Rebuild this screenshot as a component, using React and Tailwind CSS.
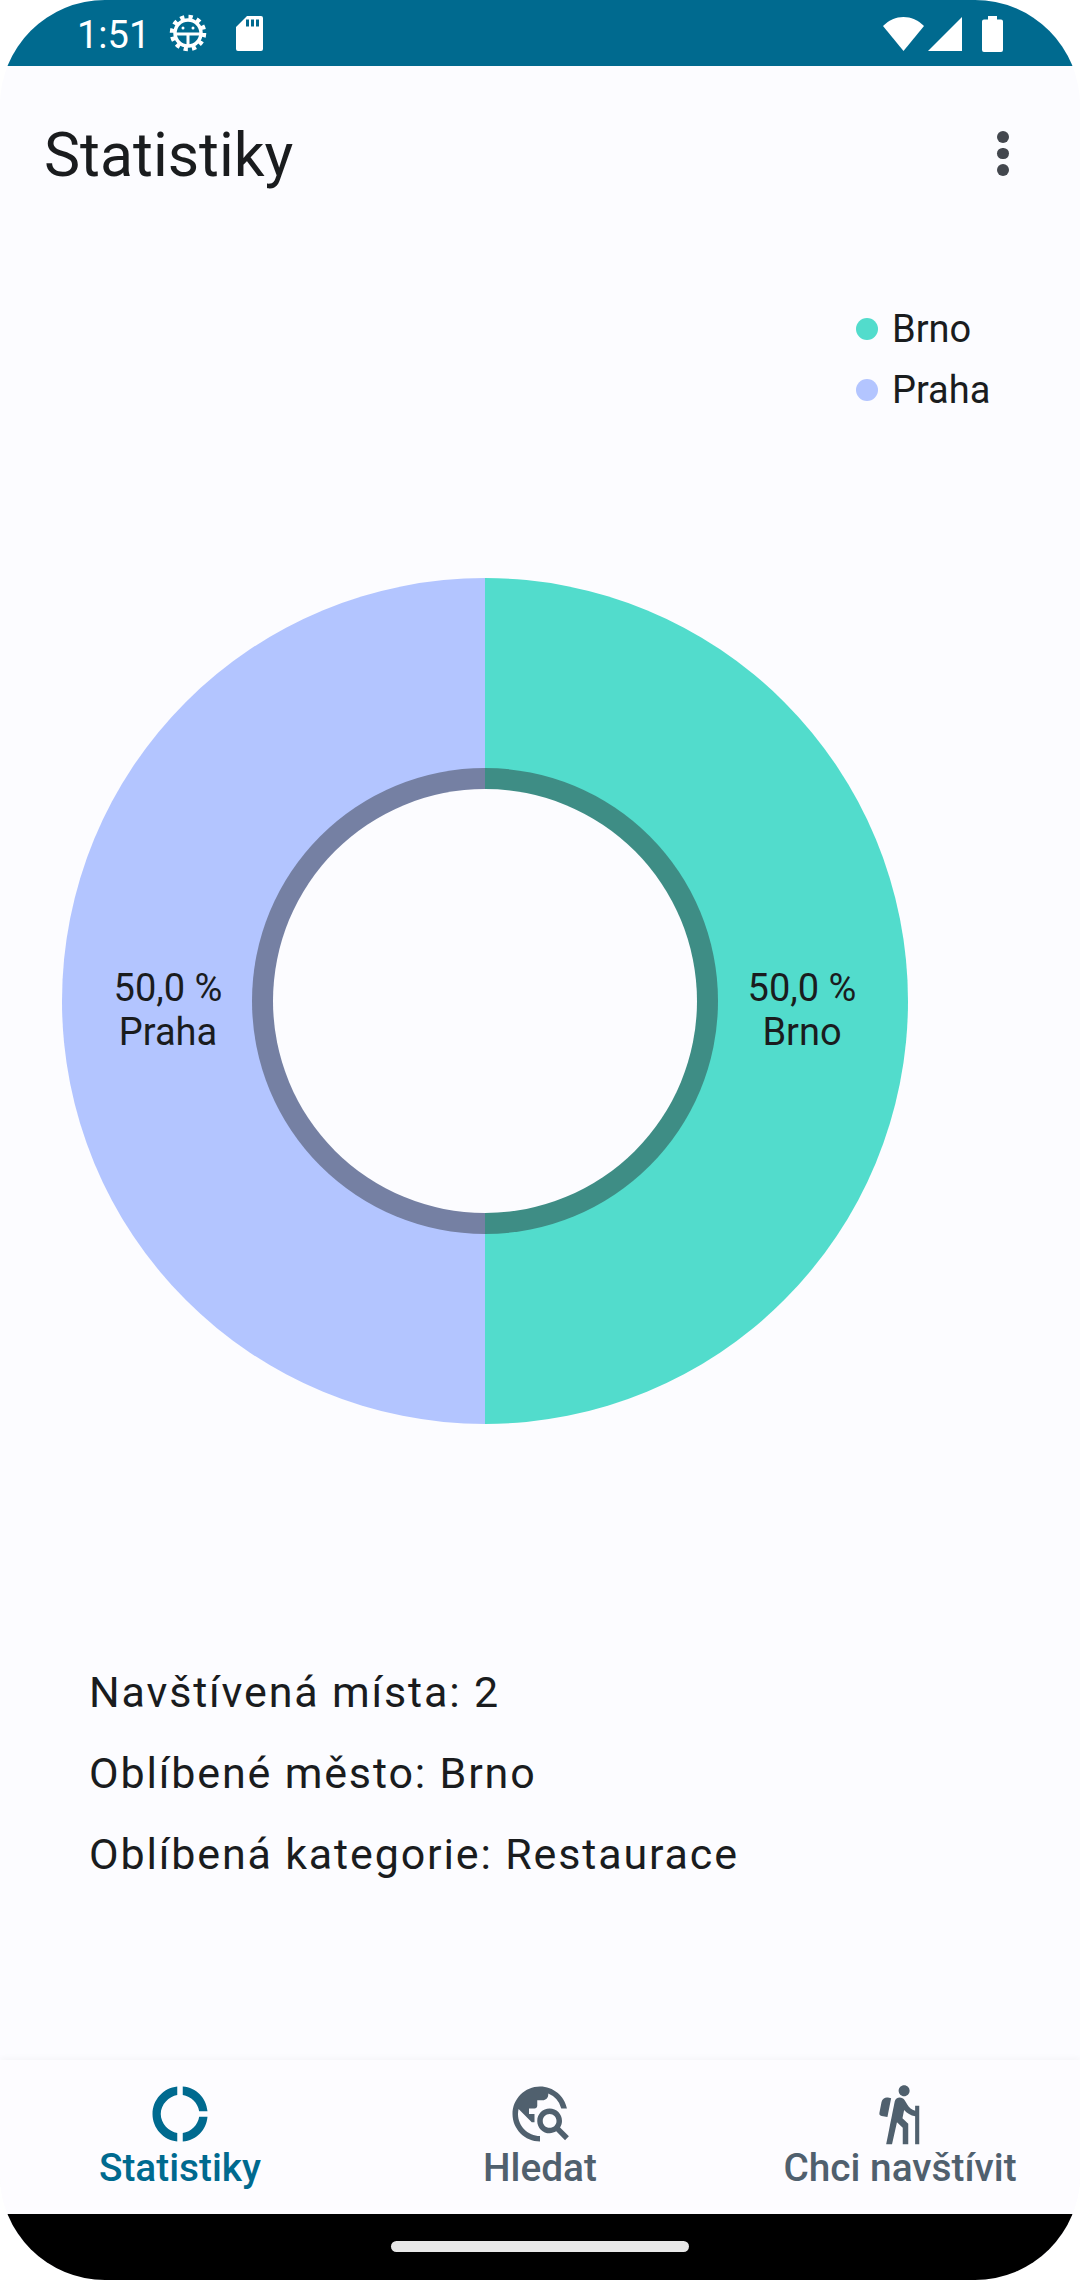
import { MdDonutLarge, MdTravelExplore, MdHiking } from 'react-icons/md';

const font = { fontFamily: 'Roboto, sans-serif' };

// Debug notification gear with the little android face inside
const GearIcon = () => (
  <svg width="38" height="38" viewBox="0 0 38 38" fill="none" stroke="white">
    <circle cx="19" cy="19" r="16" strokeWidth="4.5" strokeDasharray="4.2 4.18" />
    <circle cx="19" cy="19" r="13" strokeWidth="3.5" />
    <path d="M6 20h26M19 20v13" strokeWidth="3" />
    <circle cx="14" cy="14" r="1.5" fill="white" stroke="none" />
    <circle cx="24" cy="14" r="1.5" fill="white" stroke="none" />
  </svg>
);

const SdIcon = () => (
  <svg className="ml-[29px]" width="27" height="35" viewBox="0 0 27 35" fill="white">
    <path d="M11 0h14a2 2 0 0 1 2 2v31a2 2 0 0 1-2 2H2a2 2 0 0 1-2-2V11zM10 3.500v7h3v-7zM15 3.500v7h3v-7zM20 3.500v7h3v-7z" fillRule="evenodd" />
  </svg>
);

const StatusBar = () => (
  <div className="h-[66px] shrink-0 bg-[#006a8f] flex items-center pl-[77px] pr-[77px] text-white">
    <span className="text-[38px] leading-none pt-[3px] w-[92px]">1:51</span>
    <GearIcon />
    <SdIcon />
    <div className="ml-auto flex items-center pt-[2px]">
      <svg width="41" height="34" viewBox="0 0 41 34" fill="white">
        <path d="M0 9C6 3 13 0 20.500 0S35 3 41 9L20.500 34z" />
      </svg>
      <svg className="ml-[4px]" width="34" height="34" viewBox="0 0 34 34" fill="white">
        <path d="M34 0v34H0z" />
      </svg>
      <svg className="ml-[20px]" width="21" height="36" viewBox="0 0 21 36" fill="white">
        <path d="M6 0h9v3.500h4a2 2 0 0 1 2 2V34a2 2 0 0 1-2 2H2a2 2 0 0 1-2-2V5.500a2 2 0 0 1 2-2h4z" />
      </svg>
    </div>
  </div>
);

const AppBar = () => (
  <div className="h-[176px] shrink-0 flex items-center pl-[44px] pt-[5px] relative">
    <h1 className="text-[60.800px] leading-none text-[#1a1c1e] whitespace-nowrap">Statistiky</h1>
    <div className="absolute left-[997px] top-[65px] flex flex-col gap-[5px]">
      <span className="w-[11.500px] h-[11.500px] rounded-full bg-[#43474e]" />
      <span className="w-[11.500px] h-[11.500px] rounded-full bg-[#43474e]" />
      <span className="w-[11.500px] h-[11.500px] rounded-full bg-[#43474e]" />
    </div>
  </div>
);

const Legend = () => (
  <div className="mt-[56px] ml-[856px] flex flex-col text-[#1a1c1e]">
    {[
      { name: 'Brno', color: 'bg-[#52dccc]' },
      { name: 'Praha', color: 'bg-[#b3c5ff]' },
    ].map((item) => (
      <div key={item.name} className="h-[61px] flex items-center">
        <span className={`w-[22px] h-[22px] rounded-full ${item.color}`} />
        <span className="ml-[14px] text-[38px] leading-none">{item.name}</span>
      </div>
    ))}
  </div>
);

const Donut = () => (
  <div className="mt-[158px] ml-[62px] w-[846px] h-[846px] relative">
    <svg width="846" height="846" viewBox="0 0 846 846" className="block">
      <path d="M423 0a423 423 0 0 1 0 846z" fill="#52dccc" />
      <path d="M423 0a423 423 0 0 0 0 846z" fill="#b3c5ff" />
      <path d="M423 190a233 233 0 0 1 0 466z" fill="#3e8d85" />
      <path d="M423 190a233 233 0 0 0 0 466z" fill="#7580a3" />
      <circle cx="423" cy="423" r="212" fill="#fcfcff" />
    </svg>
    <div className="absolute left-[6px] top-[388px] w-[200px] text-center text-[38px] leading-[44px] text-[#1a1c1e]">
      <div>50,0 %</div>
      <div>Praha</div>
    </div>
    <div className="absolute left-[640px] top-[388px] w-[200px] text-center text-[38px] leading-[44px] text-[#1a1c1e]">
      <div>50,0 %</div>
      <div>Brno</div>
    </div>
  </div>
);

const Stats = () => (
  <div className="mt-[228px] pl-[89px] text-[43px] leading-[81px] tracking-[1.85px] text-[#1a1c1e]">
    <p>Navštívená místa: 2</p>
    <p>Oblíbené město: Brno</p>
    <p>Oblíbená kategorie: Restaurace</p>
  </div>
);

const BottomNav = () => {
  const tabs = [
    { label: 'Statistiky', Icon: MdDonutLarge, active: true },
    { label: 'Hledat', Icon: MdTravelExplore },
    { label: 'Chci navštívit', Icon: MdHiking },
  ];
  return (
    <div className="mt-auto shrink-0">
      <div className="h-[154px] grid grid-cols-3 pt-[21px] bg-[#fdfcff] shadow-[0_-3px_5px_rgba(0,0,0,0.025)]">
        {tabs.map(({ label, Icon, active }) => (
          <div
            key={label}
            className={`flex flex-col items-center ${active ? 'text-[#006a8f]' : 'text-[#50606e]'}`}
          >
            <Icon size={66} />
            <span className="text-[38.800px] leading-[42px] font-medium whitespace-nowrap">{label}</span>
          </div>
        ))}
      </div>
      <div className="h-[66px] bg-black flex justify-center pt-[27px]">
        <div className="w-[298px] h-[11px] rounded-full bg-[#e8e8e8]" />
      </div>
    </div>
  );
};

export default function App() {
  return (
    <div className="w-[1080px] h-[2280px] bg-white" style={font}>
      <div className="w-full h-full rounded-[105px] overflow-hidden bg-[#fcfcff] flex flex-col">
        <StatusBar />
        <AppBar />
        <Legend />
        <Donut />
        <Stats />
        <BottomNav />
      </div>
    </div>
  );
}
